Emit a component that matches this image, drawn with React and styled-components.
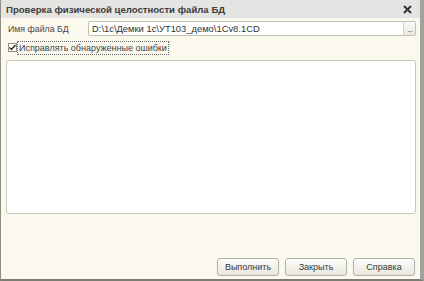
import React from "react";
import styled, { createGlobalStyle } from "styled-components";

const Global = createGlobalStyle`
  html, body { margin: 0; padding: 0; background: #fbf9ee; }
  body { font-family: "Liberation Sans", Arial, sans-serif; }
`;

const Window = styled.div`
  width: 424px;
  height: 281px;
  box-sizing: border-box;
  display: flex;
  flex-direction: column;
  background: #fbf9ee;
  border-left: 1px solid #8e8e86;
  border-bottom: 2px solid #7c7c74;
  border-right: 4px solid #a3a39d;
`;

const TitleBar = styled.div`
  height: 18px;
  flex: none;
  display: flex;
  align-items: center;
  justify-content: space-between;
  padding: 0 8px 0 5px;
  background: #e4e4e2;
  font-size: 9.6px;
  font-weight: bold;
  color: #3c3c3c;
`;

const Body = styled.div`
  flex: 1;
  display: flex;
  flex-direction: column;
  padding: 3px 4px 3px 5px;
`;

const FieldRow = styled.div`
  display: flex;
  align-items: center;
  height: 15px;
`;

const Label = styled.span`
  width: 80px;
  padding-left: 2px;
  font-size: 8.8px;
  color: #4a4a4a;
`;

const Input = styled.div`
  flex: 1;
  height: 15px;
  box-sizing: border-box;
  display: flex;
  align-items: center;
  background: #fff;
  border: 1px solid #c2c1b6;
  border-radius: 2px;
  font-size: 9.4px;
  color: #333;
  padding-left: 3px;
`;

const InputText = styled.span`
  flex: 1;
`;

const Dots = styled.span`
  width: 11px;
  height: 13px;
  border-left: 1px solid #d4d3c8;
  background: linear-gradient(#fafaf6, #e9e8e0);
  font-size: 9px;
  line-height: 15px;
  text-align: center;
  color: #777;
  letter-spacing: -1px;
`;

const CheckRow = styled.div`
  display: flex;
  align-items: center;
  margin-top: 5px;
  height: 13px;
`;

const Box = styled.span`
  width: 9px;
  height: 9px;
  box-sizing: border-box;
  border: 1px solid #8f8f88;
  background: #fff;
  display: flex;
  align-items: center;
  justify-content: center;
  margin-left: 2px;
`;

const CheckLabel = styled.span`
  margin-left: 1px;
  padding: 0 1px;
  font-size: 9px;
  color: #444;
  outline: 1px dotted #6a6a6a;
  line-height: 12px;
`;

const Log = styled.div`
  margin-top: 6px;
  height: 154px;
  box-sizing: border-box;
  background: #fff;
  border: 1px solid #c8c7bc;
  border-radius: 3px;
  width: 410px;
`;

const Footer = styled.div`
  margin-top: auto;
  display: flex;
  justify-content: flex-end;
  gap: 6px;
  padding-right: 1px;
`;

const Button = styled.button`
  width: 62px;
  height: 18px;
  box-sizing: border-box;
  padding: 0;
  border: 1px solid #b3b2a8;
  border-radius: 3px;
  background: linear-gradient(#fdfdfb, #e7e6de);
  font-family: "Liberation Sans", Arial, sans-serif;
  font-size: 9px;
  color: #3a3a3a;
`;

export default function App() {
  return (
    <>
      <Global />
      <Window>
        <TitleBar>
          <span>Проверка физической целостности файла БД</span>
          <svg width="9" height="9" viewBox="0 0 9 9">
            <path d="M1 1L8 8M8 1L1 8" stroke="#333" strokeWidth="2" />
          </svg>
        </TitleBar>
        <Body>
          <FieldRow>
            <Label>Имя файла БД</Label>
            <Input>
              <InputText>D:\1c\Демки 1c\УТ103_демо\1Cv8.1CD</InputText>
              <Dots>...</Dots>
            </Input>
          </FieldRow>
          <CheckRow>
            <Box>
              <svg width="7" height="7" viewBox="0 0 7 7">
                <path d="M0.5 3.5L2.5 5.5L6.5 1" stroke="#222" strokeWidth="1.4" fill="none" />
              </svg>
            </Box>
            <CheckLabel>Исправлять обнаруженные ошибки</CheckLabel>
          </CheckRow>
          <Log />
          <Footer>
            <Button>Выполнить</Button>
            <Button>Закрыть</Button>
            <Button>Справка</Button>
          </Footer>
        </Body>
      </Window>
    </>
  );
}
